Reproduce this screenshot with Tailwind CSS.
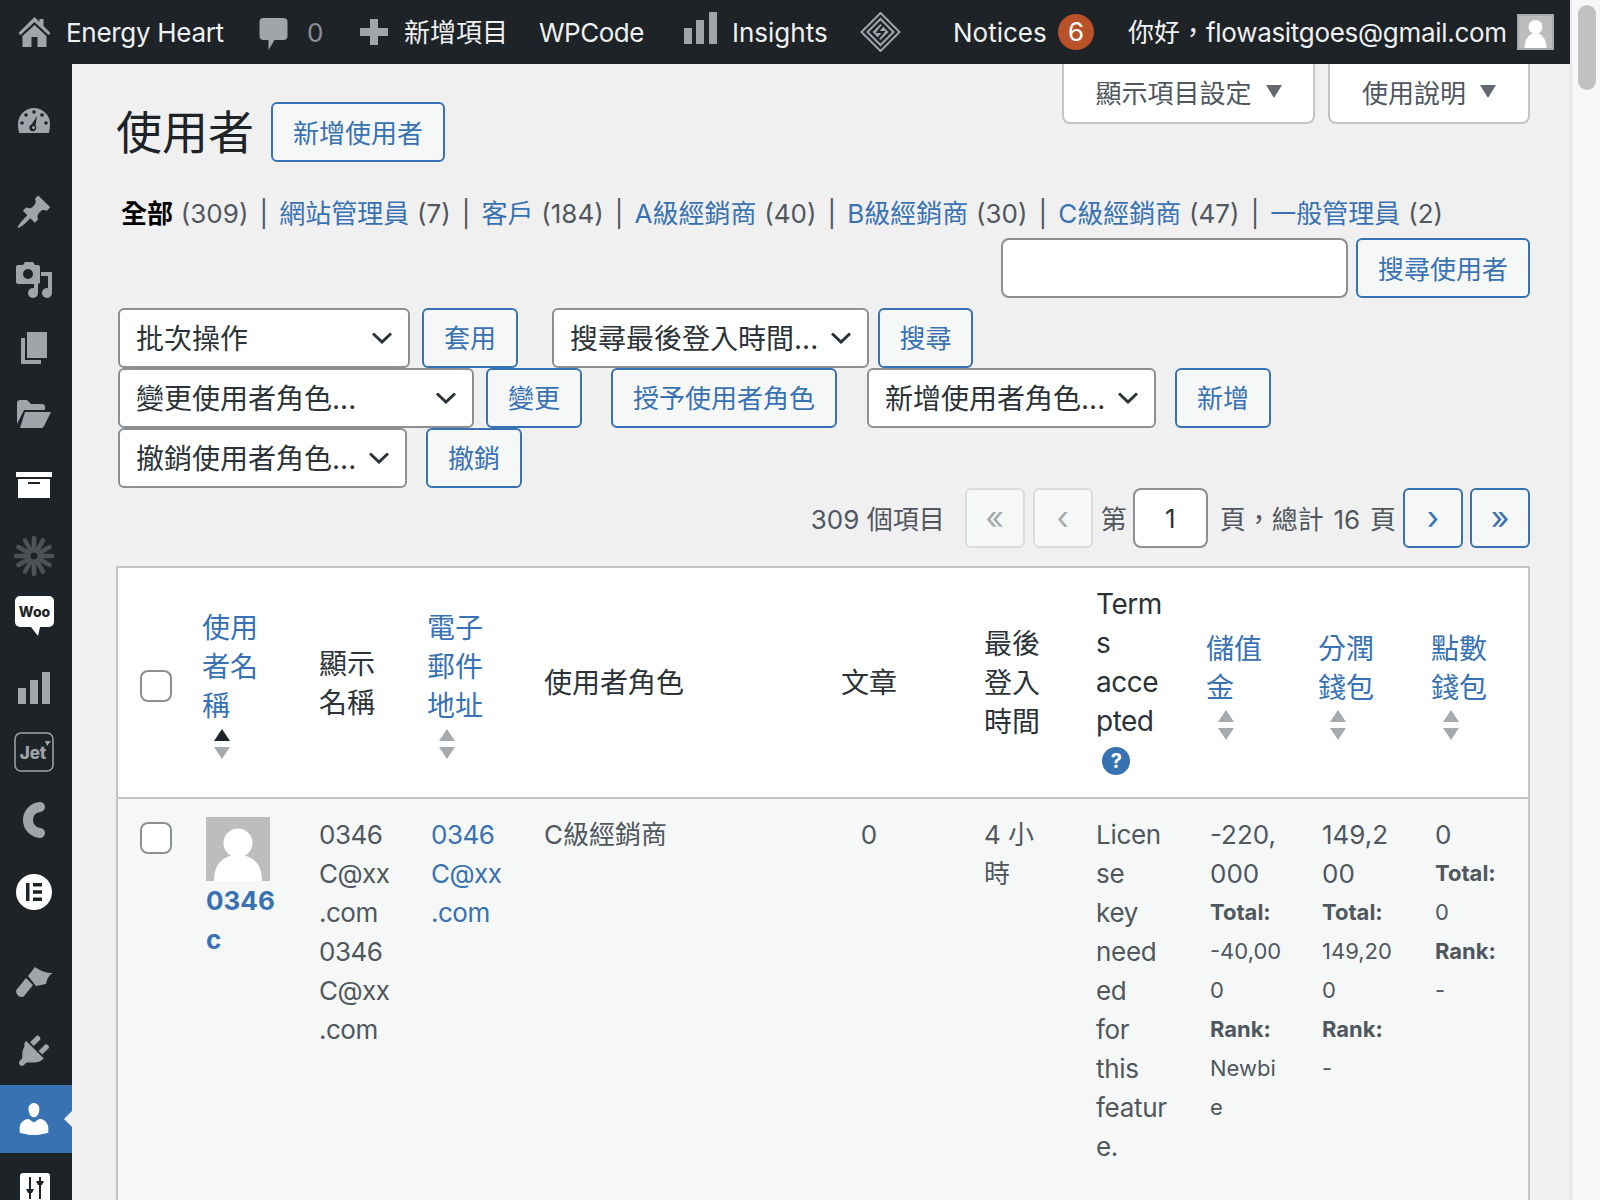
<!DOCTYPE html>
<html lang="zh-Hant">
<head>
<meta charset="utf-8">
<title>使用者</title>
<script src="https://cdn.jsdelivr.net/npm/@tailwindcss/browser@4"></script>
</head>
<body class="m-0">
<div class="flex w-[1600px] h-[1200px] overflow-hidden bg-[#f0f0f1] text-[26px] leading-[39px] text-[#50575e] font-[Inter,'Noto_Sans_CJK_TC',sans-serif]">
  <div class="w-[1570px] shrink-0 flex flex-col">
    <!-- admin bar -->
    <header class="h-[64px] shrink-0 bg-[#1d2327] flex items-center text-[#f0f0f1] whitespace-nowrap">
      <svg class="ml-[18px] w-[33px] h-[30px] shrink-0" viewBox="0 0 32 30" fill="#a0a5aa"><path d="M16 0l5 5V2h4v7l7 7-2 2L16 5 2 18l-2-2z"/><path d="M16 8l12 11v11h-9V20h-6v10H4V19z"/></svg>
      <span class="ml-[15px] w-[158px] pt-[1px] tracking-[-0.3px]">Energy Heart</span>
      <svg class="ml-[35px] w-[29px] h-[32px] shrink-0 mt-[4px]" viewBox="0 0 28 32" fill="#a0a5aa"><path d="M4 0H24a4 4 0 0 1 4 4V18a4 4 0 0 1-4 4H15L9 32V22H4a4 4 0 0 1-4-4V4a4 4 0 0 1 4-4Z"/></svg>
      <span class="ml-[19px] w-[16px] pt-[1px] text-[#8c8f94]">0</span>
      <svg class="ml-[37px] w-[28px] h-[26px] shrink-0" viewBox="0 0 28 26" fill="#a0a5aa"><path d="M10 0h8v9h10v8H18v9h-8v-9H0V9h10z"/></svg>
      <span class="ml-[16px] w-[104px] pt-[1px]">新增項目</span>
      <span class="ml-[31px] w-[104px] pt-[1px] tracking-[-0.5px]">WPCode</span>
      <svg class="ml-[41px] w-[33px] h-[32px] shrink-0 mb-[8px]" viewBox="0 0 33 32" fill="#a0a5aa"><path d="M0 16h8v16H0zM12 8h8v24h-8zM25 0h8v32h-8z"/></svg>
      <span class="ml-[15px] w-[96px] pt-[1px]">Insights</span>
      <svg class="ml-[32px] w-[41px] h-[40px] shrink-0" viewBox="0 0 40 40" fill="none" stroke="#a0a5aa"><path d="M20 1L39 20 20 39 1 20z" stroke-width="2"/><path d="M20 7L33 20 20 33 7 20z" stroke-width="2"/><path d="M20 12l8 8-8 8-8-8z" fill="#a0a5aa" stroke="none"/><path d="M22 14l-5 6h6l-5 6" stroke="#1d2327" stroke-width="2"/></svg>
      <span class="ml-[52px] w-[93px] pt-[1px]">Notices</span>
      <span class="ml-[12px] w-[36px] h-[36px] shrink-0 rounded-full bg-[#ba5229] text-white text-center leading-[36px]">6</span>
      <span class="ml-[34px] w-[378px] pt-[1px]">你好，<span class="tracking-[-0.3px]">flowasitgoes@gmail.com</span></span>
      <span class="ml-[11px] w-[37px] h-[36px] shrink-0 border-2 border-[#a7aaad] bg-[#bdbdbd] overflow-hidden">
        <svg viewBox="0 0 32 32" class="w-full h-full block" fill="#fff"><circle cx="16" cy="11" r="7"/><path d="M5 32c0-9 5-15 11-15s11 6 11 15z"/></svg>
      </span>
    </header>

    <div class="flex flex-1 min-h-0">
      <!-- sidebar -->
      <nav class="w-[72px] shrink-0 bg-[#1d2327] overflow-hidden flex flex-col">
        <div class="w-[68px] flex flex-col items-center">
          <svg class="mt-[44px] w-[32px] h-[25px] shrink-0" viewBox="0 0 32 25"><path fill="#a0a5aa" d="M16 0A16 16 0 0 1 32 16c0 3-.5 6.500-1.200 9H1.200C.5 22.500 0 19 0 16A16 16 0 0 1 16 0Z"/><g fill="#1d2327"><circle cx="16" cy="4" r="1.800"/><circle cx="8" cy="7" r="1.800"/><circle cx="24" cy="7" r="1.800"/><circle cx="4" cy="15" r="1.800"/><circle cx="28" cy="15" r="1.800"/><path d="M19 8l-1.500 9.500a3.500 3.500 0 1 1-4-1z"/></g><circle cx="15.500" cy="19.500" r="1.500" fill="#a0a5aa"/></svg>
          <svg class="mt-[62px] w-[34px] h-[34px] shrink-0" viewBox="1 1 18 18" fill="#a0a5aa"><path d="M10.440 3.020l1.820-1.820 6.360 6.350-1.830 1.820c-1.050-.68-2.480-.57-3.410.36l-.75.75c-.92.93-1.040 2.350-.35 3.410l-1.830 1.820-2.410-2.410-2.800 2.790c-.42.42-3.380 2.710-3.800 2.290s1.860-3.390 2.280-3.810l2.790-2.790L4.100 9.360l1.830-1.820c1.050.69 2.480.57 3.400-.36l.75-.75c.93-.92 1.050-2.350.36-3.410z"/></svg>
          <svg class="mt-[33px] w-[36px] h-[36px] shrink-0" viewBox="0 0 36 36"><path fill="#a0a5aa" d="M2 3h5l2-3h8l2 3h3a2 2 0 0 1 2 2v15a2 2 0 0 1-2 2H2a2 2 0 0 1-2-2V5a2 2 0 0 1 2-2z"/><circle cx="12" cy="12" r="5" fill="#1d2327"/><path fill="#a0a5aa" d="M25 10h11v21h-4V14h-7z"/><circle cx="17" cy="31" r="5" fill="#a0a5aa"/><circle cx="31" cy="31" r="5" fill="#a0a5aa"/><path fill="#a0a5aa" d="M18 22h4v9h-4z"/></svg>
          <svg class="mt-[34px] w-[26px] h-[32px] shrink-0" viewBox="0 0 26 32" fill="#a0a5aa"><path d="M6 0h20v26H6zM0 6h4v22h16v4H0z"/></svg>
          <svg class="mt-[36px] w-[34px] h-[28px] shrink-0" viewBox="0 0 34 28" fill="#a0a5aa"><path d="M0 3a3 3 0 0 1 3-3h7l4 4h11a3 3 0 0 1 3 3v3H7L0 24z"/><path d="M8 12h26l-7 14a3 3 0 0 1-2 2H3z"/></svg>
          <svg class="mt-[44px] w-[36px] h-[26px] shrink-0" viewBox="0 0 36 26" fill="#fff"><path d="M0 0h36v5H0zM2 7h32v19H2z"/><path fill="#1d2327" d="M12 10h12v2H12z"/></svg>
          <svg class="mt-[38px] w-[40px] h-[40px] shrink-0" viewBox="-20 -20 40 40" fill="none" stroke="#4f5254" stroke-width="4.500" stroke-linecap="round">
            <g><path d="M0-8V-18"/><path transform="rotate(30)" d="M0-8V-18"/><path transform="rotate(60)" d="M0-8V-18"/><path transform="rotate(90)" d="M0-8V-18"/><path transform="rotate(120)" d="M0-8V-18"/><path transform="rotate(150)" d="M0-8V-18"/><path transform="rotate(180)" d="M0-8V-18"/><path transform="rotate(210)" d="M0-8V-18"/><path transform="rotate(240)" d="M0-8V-18"/><path transform="rotate(270)" d="M0-8V-18"/><path transform="rotate(300)" d="M0-8V-18"/><path transform="rotate(330)" d="M0-8V-18"/></g>
            <circle r="5" stroke-width="3"/>
          </svg>
          <svg class="mt-[20px] w-[39px] h-[40px] shrink-0" viewBox="0 0 39 40"><path fill="#fff" d="M5 0h29a5 5 0 0 1 5 5v21a5 5 0 0 1-5 5H25l-2 9-7-9H5a5 5 0 0 1-5-5V5a5 5 0 0 1 5-5z"/><text x="19.500" y="21" text-anchor="middle" font-family="Inter, sans-serif" font-size="14" font-weight="800" fill="#1d2327">Woo</text></svg>
          <svg class="mt-[36px] w-[32px] h-[32px] shrink-0" viewBox="0 0 32 32" fill="#a0a5aa"><path d="M0 16h8v16H0zM12 8h8v24h-8zM24 0h8v32h-8z"/></svg>
          <svg class="mt-[28px] w-[40px] h-[40px] shrink-0" viewBox="0 0 40 40"><rect x="1" y="1" width="38" height="38" rx="6" fill="none" stroke="#a0a5aa" stroke-width="1.500"/><text x="19" y="27" text-anchor="middle" font-family="Inter, sans-serif" font-size="17" font-weight="800" fill="#a0a5aa">Jet</text><path fill="#a0a5aa" d="M31 9h6l-4 5z"/></svg>
          <svg class="mt-[30px] w-[22px] h-[36px] shrink-0" viewBox="0 0 22 36" fill="none" stroke="#a0a5aa" stroke-width="10" stroke-linecap="round"><path d="M17 5C9 6 5 12 5 18c0 7 5 12 12 13"/></svg>
          <svg class="mt-[36px] w-[36px] h-[36px] shrink-0" viewBox="0 0 36 36"><circle cx="18" cy="18" r="18" fill="#fff"/><path fill="#1d2327" d="M10 9h3.500v18H10zM17 9h9v3.500h-9zM17 16.200h9v3.500h-9zM17 23.500h9V27h-9z"/></svg>
          <svg class="mt-[56px] w-[37px] h-[31px] shrink-0" viewBox="0 0 37 31" fill="#a0a5aa"><path d="M10 12l7 7-8 10a4.500 4.500 0 0 1-8-1 4 4 0 0 1 1-6z"/><path d="M12 10l7-9c6 4 11 6 18 6-4 2-6 6-7 11l-10 2z"/></svg>
          <svg class="mt-[38px] w-[32px] h-[32px] shrink-0" viewBox="2 2 16 16.300" fill="#a0a5aa"><path d="M13.110 4.360L9.870 7.600 8 5.730l3.240-3.240c.35-.34 1.050-.2 1.560.32.52.51.66 1.210.31 1.550zm-8 1.770l.91-1.120 9.010 9.010-1.190.84c-.71.71-2.630 1.160-3.820 1.160H6.140L4.900 17.260c-.59.59-1.540.59-2.120 0-.59-.58-.59-1.530 0-2.120l1.240-1.240v-1.890c0-1.130.4-3.190 1.090-3.880zm7.260 3.970l3.240-3.240c.34-.35 1.040-.21 1.550.31.52.51.66 1.210.31 1.550l-3.240 3.250z"/></svg>
        </div>
        <div class="relative mt-[18px] h-[68px] w-[72px] shrink-0 bg-[#3872b2] flex items-center pl-[19px]">
          <svg class="w-[30px] h-[32px]" viewBox="2.700 2 14.600 16.200" fill="#fff"><path d="M10 9.250c-2.270 0-2.730-3.440-2.730-3.440C7 4.020 7.820 2 9.970 2c2.160 0 2.980 2.020 2.710 3.810 0 0-.41 3.440-2.680 3.440zm0 2.570L12.720 10c2.390 0 4.520 2.330 4.520 4.530v2.490s-3.650 1.130-7.240 1.130c-3.650 0-7.240-1.130-7.240-1.130v-2.490c0-2.250 1.940-4.480 4.470-4.480z"/></svg>
          <span class="absolute right-0 top-[26px] w-0 h-0 border-y-[8px] border-y-transparent border-r-[8px] border-r-[#f0f0f1]"></span>
        </div>
        <div class="ml-[20px] mt-[20px] w-[30px] h-[30px] shrink-0 bg-white rounded-[3px] relative">
          <svg class="w-[30px] h-[30px]" viewBox="0 0 30 30" fill="#1d2327"><path d="M9 4h2v22H9zM19 4h2v22h-2z"/><path d="M6 16h8l-2 4H8zM16 8h8l-2 4h-4z"/></svg>
        </div>
      </nav>

      <!-- content -->
      <main class="flex-1 min-w-0 pl-[44px] pr-[40px]">
        <!-- screen meta -->
        <div class="flex justify-end gap-[13px]">
          <div class="w-[253px] h-[60px] bg-white border-2 border-t-0 border-[#c3c4c7] rounded-b-[8px] flex items-center justify-center gap-[14px]">
            <span>顯示項目設定</span><svg class="w-[16px] h-[13px] mt-[-3px]" viewBox="0 0 16 13" fill="#646970"><path d="M0 0h16L8 13z"/></svg>
          </div>
          <div class="w-[202px] h-[60px] bg-white border-2 border-t-0 border-[#c3c4c7] rounded-b-[8px] flex items-center justify-center gap-[14px]">
            <span>使用說明</span><svg class="w-[16px] h-[13px] mt-[-3px]" viewBox="0 0 16 13" fill="#646970"><path d="M0 0h16L8 13z"/></svg>
          </div>
        </div>
        <!-- heading -->
        <div class="flex items-center mt-[-22px] h-[60px]">
          <h1 class="text-[46px] leading-[60px] font-normal text-[#1d2327]">使用者</h1>
          <a class="ml-[17px] w-[174px] h-[60px] pt-[2px] flex items-center justify-center border-2 border-[#3872b2] rounded-[6px] bg-[#f6f7f7] text-[#3872b2]">新增使用者</a>
        </div>
        <!-- views -->
        <p class="mt-[32px] ml-[5px] whitespace-nowrap h-[39px] [word-spacing:0.5px]"><b class="text-black">全部</b> (309) <span class="mx-[3.25px]">|</span> <a class="text-[#3872b2]">網站管理員</a> (7) <span class="mx-[3.25px]">|</span> <a class="text-[#3872b2]">客戶</a> (184) <span class="mx-[3.25px]">|</span> <a class="text-[#3872b2]">A級經銷商</a> (40) <span class="mx-[3.25px]">|</span> <a class="text-[#3872b2]">B級經銷商</a> (30) <span class="mx-[3.25px]">|</span> <a class="text-[#3872b2]">C級經銷商</a> (47) <span class="mx-[3.25px]">|</span> <a class="text-[#3872b2]">一般管理員</a> (2)</p>
        <!-- search -->
        <div class="flex justify-end gap-[8px] mt-[5px]">
          <div class="w-[347px] h-[60px] bg-white border-2 border-[#8c8f94] rounded-[8px]"></div>
          <a class="w-[174px] h-[60px] pt-[2px] flex items-center justify-center border-2 border-[#3872b2] rounded-[6px] bg-[#f6f7f7] text-[#3872b2]">搜尋使用者</a>
        </div>
        <!-- bulk row 1 -->
        <div class="flex mt-[10px] h-[60px] pl-[2px] whitespace-nowrap">
          <div class="w-[292px] h-[60px] bg-white border-2 border-[#8c8f94] rounded-[6px] flex items-center justify-between pl-[16px] pr-[15px] text-[28px] text-[#2c3338]"><span class="pt-[2px]">批次操作</span><svg class="w-[22px] h-[12px]" viewBox="0 0 22 12" fill="none" stroke="#2c3338" stroke-width="3"><path d="M2 1.500l9 8.500 9-8.500"/></svg></div>
          <a class="ml-[12px] w-[96px] h-[60px] pt-[1px] flex items-center justify-center border-2 border-[#3872b2] rounded-[6px] bg-[#f6f7f7] text-[#3872b2]">套用</a>
          <div class="ml-[34px] w-[317px] h-[60px] bg-white border-2 border-[#8c8f94] rounded-[6px] flex items-center justify-between pl-[16px] pr-[15px] text-[28px] text-[#2c3338]"><span class="pt-[2px]">搜尋最後登入時間...</span><svg class="w-[22px] h-[12px]" viewBox="0 0 22 12" fill="none" stroke="#2c3338" stroke-width="3"><path d="M2 1.500l9 8.500 9-8.500"/></svg></div>
          <a class="ml-[9px] w-[95px] h-[60px] pt-[1px] flex items-center justify-center border-2 border-[#3872b2] rounded-[6px] bg-[#f6f7f7] text-[#3872b2]">搜尋</a>
        </div>
        <!-- bulk row 2 -->
        <div class="flex h-[60px] pl-[2px] whitespace-nowrap">
          <div class="w-[356px] h-[60px] bg-white border-2 border-[#8c8f94] rounded-[6px] flex items-center justify-between pl-[16px] pr-[15px] text-[28px] text-[#2c3338]"><span class="pt-[2px]">變更使用者角色...</span><svg class="w-[22px] h-[12px]" viewBox="0 0 22 12" fill="none" stroke="#2c3338" stroke-width="3"><path d="M2 1.500l9 8.500 9-8.500"/></svg></div>
          <a class="ml-[12px] w-[96px] h-[60px] pt-[1px] flex items-center justify-center border-2 border-[#3872b2] rounded-[6px] bg-[#f6f7f7] text-[#3872b2]">變更</a>
          <a class="ml-[29px] w-[226px] h-[60px] pt-[1px] flex items-center justify-center border-2 border-[#3872b2] rounded-[6px] bg-[#f6f7f7] text-[#3872b2]">授予使用者角色</a>
          <div class="ml-[30px] w-[289px] h-[60px] bg-white border-2 border-[#8c8f94] rounded-[6px] flex items-center justify-between pl-[16px] pr-[15px] text-[28px] text-[#2c3338]"><span class="pt-[2px]">新增使用者角色...</span><svg class="w-[22px] h-[12px]" viewBox="0 0 22 12" fill="none" stroke="#2c3338" stroke-width="3"><path d="M2 1.500l9 8.500 9-8.500"/></svg></div>
          <a class="ml-[19px] w-[96px] h-[60px] pt-[1px] flex items-center justify-center border-2 border-[#3872b2] rounded-[6px] bg-[#f6f7f7] text-[#3872b2]">新增</a>
        </div>
        <!-- bulk row 3 -->
        <div class="flex h-[60px] pl-[2px] whitespace-nowrap">
          <div class="w-[289px] h-[60px] bg-white border-2 border-[#8c8f94] rounded-[6px] flex items-center justify-between pl-[16px] pr-[15px] text-[28px] text-[#2c3338]"><span class="pt-[2px]">撤銷使用者角色...</span><svg class="w-[22px] h-[12px]" viewBox="0 0 22 12" fill="none" stroke="#2c3338" stroke-width="3"><path d="M2 1.500l9 8.500 9-8.500"/></svg></div>
          <a class="ml-[19px] w-[96px] h-[60px] pt-[1px] flex items-center justify-center border-2 border-[#3872b2] rounded-[6px] bg-[#f6f7f7] text-[#3872b2]">撤銷</a>
        </div>
        <!-- pagination -->
        <div class="flex items-center justify-end h-[60px] whitespace-nowrap">
          <span class="pt-[2px]">309 個項目</span>
          <span class="ml-[20px] w-[60px] h-[60px] flex items-center justify-center border-2 border-[#dcdcde] rounded-[6px] bg-[#f6f7f7] text-[#a7aaad] text-[32px] pb-[2px]">«</span>
          <span class="ml-[8px] w-[60px] h-[60px] flex items-center justify-center border-2 border-[#dcdcde] rounded-[6px] bg-[#f6f7f7] text-[#a7aaad] text-[32px] pb-[2px]">‹</span>
          <span class="ml-[8px] pt-[2px]">第</span>
          <span class="ml-[6px] w-[75px] h-[60px] flex items-center justify-center bg-white border-2 border-[#8c8f94] rounded-[8px] text-[#2c3338]">1</span>
          <span class="ml-[12px] pt-[2px] [word-spacing:2.500px]">頁，總計 16 頁</span>
          <a class="ml-[7px] w-[60px] h-[60px] flex items-center justify-center border-2 border-[#3872b2] rounded-[6px] bg-[#f6f7f7] text-[#3872b2] text-[32px] pb-[2px]">›</a>
          <a class="ml-[7px] w-[60px] h-[60px] flex items-center justify-center border-2 border-[#3872b2] rounded-[6px] bg-[#f6f7f7] text-[#3872b2] text-[32px] pb-[2px]">»</a>
        </div>
        <!-- table -->
        <table class="mt-[18px] w-[1414px] table-fixed border-separate border-spacing-0 border-2 border-[#c3c4c7] bg-white whitespace-nowrap">
          <colgroup>
            <col class="w-[68px]"><col class="w-[113px]"><col class="w-[113px]"><col class="w-[112px]"><col class="w-[249px]"><col class="w-[192px]"><col class="w-[112px]"><col class="w-[113px]"><col class="w-[112px]"><col class="w-[113px]"><col class="w-[113px]">
          </colgroup>
          <thead>
            <tr class="h-[231px] text-[#2c3338] text-[28px]">
              <th class="border-b-2 border-[#c3c4c7] pl-[22px] align-middle font-normal"><span class="block w-[32px] h-[32px] mt-[7px] bg-white border-2 border-[#8c8f94] rounded-[8px]"></span></th>
              <th class="border-b-2 border-[#c3c4c7] pl-[16px] pt-[2px] align-middle font-normal text-left text-[#3872b2]">使用<br>者名<br>稱
                <svg class="block ml-[12px] mt-[3px] w-[16px] h-[30px]" viewBox="0 0 16 30"><path fill="#1d2327" d="M8 0l8 12H0z"/><path fill="#a7aaad" d="M0 18h16L8 30z"/></svg></th>
              <th class="border-b-2 border-[#c3c4c7] pl-[20px] pt-[2px] align-middle font-normal text-left">顯示<br>名稱</th>
              <th class="border-b-2 border-[#c3c4c7] pl-[15px] pt-[2px] align-middle font-normal text-left text-[#3872b2]">電子<br>郵件<br>地址
                <svg class="block ml-[12px] mt-[3px] w-[16px] h-[30px]" viewBox="0 0 16 30" fill="#a7aaad"><path d="M8 0l8 12H0zM0 18h16L8 30z"/></svg></th>
              <th class="border-b-2 border-[#c3c4c7] pl-[20px] pt-[2px] align-middle font-normal text-left">使用者角色</th>
              <th class="border-b-2 border-[#c3c4c7] pt-[2px] align-middle font-normal text-center">文章</th>
              <th class="border-b-2 border-[#c3c4c7] pl-[19px] pt-[2px] align-middle font-normal text-left">最後<br>登入<br>時間</th>
              <th class="border-b-2 border-[#c3c4c7] pl-[19px] pb-[5px] align-middle font-normal text-left tracking-[-0.5px]">Term<br>s<br>acce<br>pted
                <span class="block ml-[6px] mt-[6px] w-[28px] h-[28px] rounded-full bg-[#3872b2] text-white text-[20px] leading-[28px] font-bold text-center">?</span></th>
              <th class="border-b-2 border-[#c3c4c7] pl-[16px] pt-[4px] align-middle font-normal text-left text-[#3872b2]">儲值<br>金
                <svg class="block ml-[12px] mt-[2px] w-[16px] h-[30px]" viewBox="0 0 16 30" fill="#a7aaad"><path d="M8 0l8 12H0zM0 18h16L8 30z"/></svg></th>
              <th class="border-b-2 border-[#c3c4c7] pl-[16px] pt-[4px] align-middle font-normal text-left text-[#3872b2]">分潤<br>錢包
                <svg class="block ml-[12px] mt-[2px] w-[16px] h-[30px]" viewBox="0 0 16 30" fill="#a7aaad"><path d="M8 0l8 12H0zM0 18h16L8 30z"/></svg></th>
              <th class="border-b-2 border-[#c3c4c7] pl-[16px] pt-[4px] align-middle font-normal text-left text-[#3872b2]">點數<br>錢包
                <svg class="block ml-[12px] mt-[2px] w-[16px] h-[30px]" viewBox="0 0 16 30" fill="#a7aaad"><path d="M8 0l8 12H0zM0 18h16L8 30z"/></svg></th>
            </tr>
          </thead>
          <tbody>
            <tr class="bg-[#f6f7f7] align-top">
              <td class="pl-[22px] pt-[23px]"><span class="block w-[32px] h-[32px] bg-white border-2 border-[#8c8f94] rounded-[8px]"></span></td>
              <td class="pl-[20px] pt-[18px] text-[#3872b2] font-bold">
                <svg class="block w-[64px] h-[64px]" viewBox="0 0 64 64"><rect width="64" height="64" fill="#bdbdbd"/><circle cx="32" cy="26" r="14.500" fill="#fff"/><path fill="#fff" d="M8 64c0-18 10-26 24-26s24 8 24 26z"/></svg>
                0346<br>c</td>
              <td class="pl-[20px] pt-[16px] tracking-[-0.5px]">0346<br>C@xx<br>.com<br>0346<br>C@xx<br>.com</td>
              <td class="pl-[19px] pt-[16px] text-[#3872b2] tracking-[-0.5px]">0346<br>C@xx<br>.com</td>
              <td class="pl-[20px] pt-[16px]">C級經銷商</td>
              <td class="pt-[16px] text-center">0</td>
              <td class="pl-[19px] pt-[16px]">4 小<br>時</td>
              <td class="pl-[19px] pt-[16px] pb-[80px] tracking-[-0.3px]">Licen<br>se<br>key<br>need<br>ed<br>for<br>this<br>featur<br>e.</td>
              <td class="pl-[20px] pt-[16px]">-220,<br>000<span class="block text-[22px] leading-[39px]"><b>Total:</b><br>-40,00<br>0<br><b>Rank:</b><br>Newbi<br>e</span></td>
              <td class="pl-[20px] pt-[16px]">149,2<br>00<span class="block text-[22px] leading-[39px]"><b>Total:</b><br>149,20<br>0<br><b>Rank:</b><br>-</span></td>
              <td class="pl-[20px] pt-[16px]">0<span class="block text-[22px] leading-[39px]"><b>Total:</b><br>0<br><b>Rank:</b><br>-</span></td>
            </tr>
          </tbody>
        </table>
      </main>
    </div>
  </div>
  <!-- scrollbar -->
  <aside class="w-[30px] shrink-0 bg-[#f7f7f7] border-l-2 border-[#e6e6e6] pt-[5px] pl-[6px]">
    <div class="w-[18px] h-[85px] rounded-full bg-[#c1c1c1]"></div>
  </aside>
</div>
</body>
</html>
